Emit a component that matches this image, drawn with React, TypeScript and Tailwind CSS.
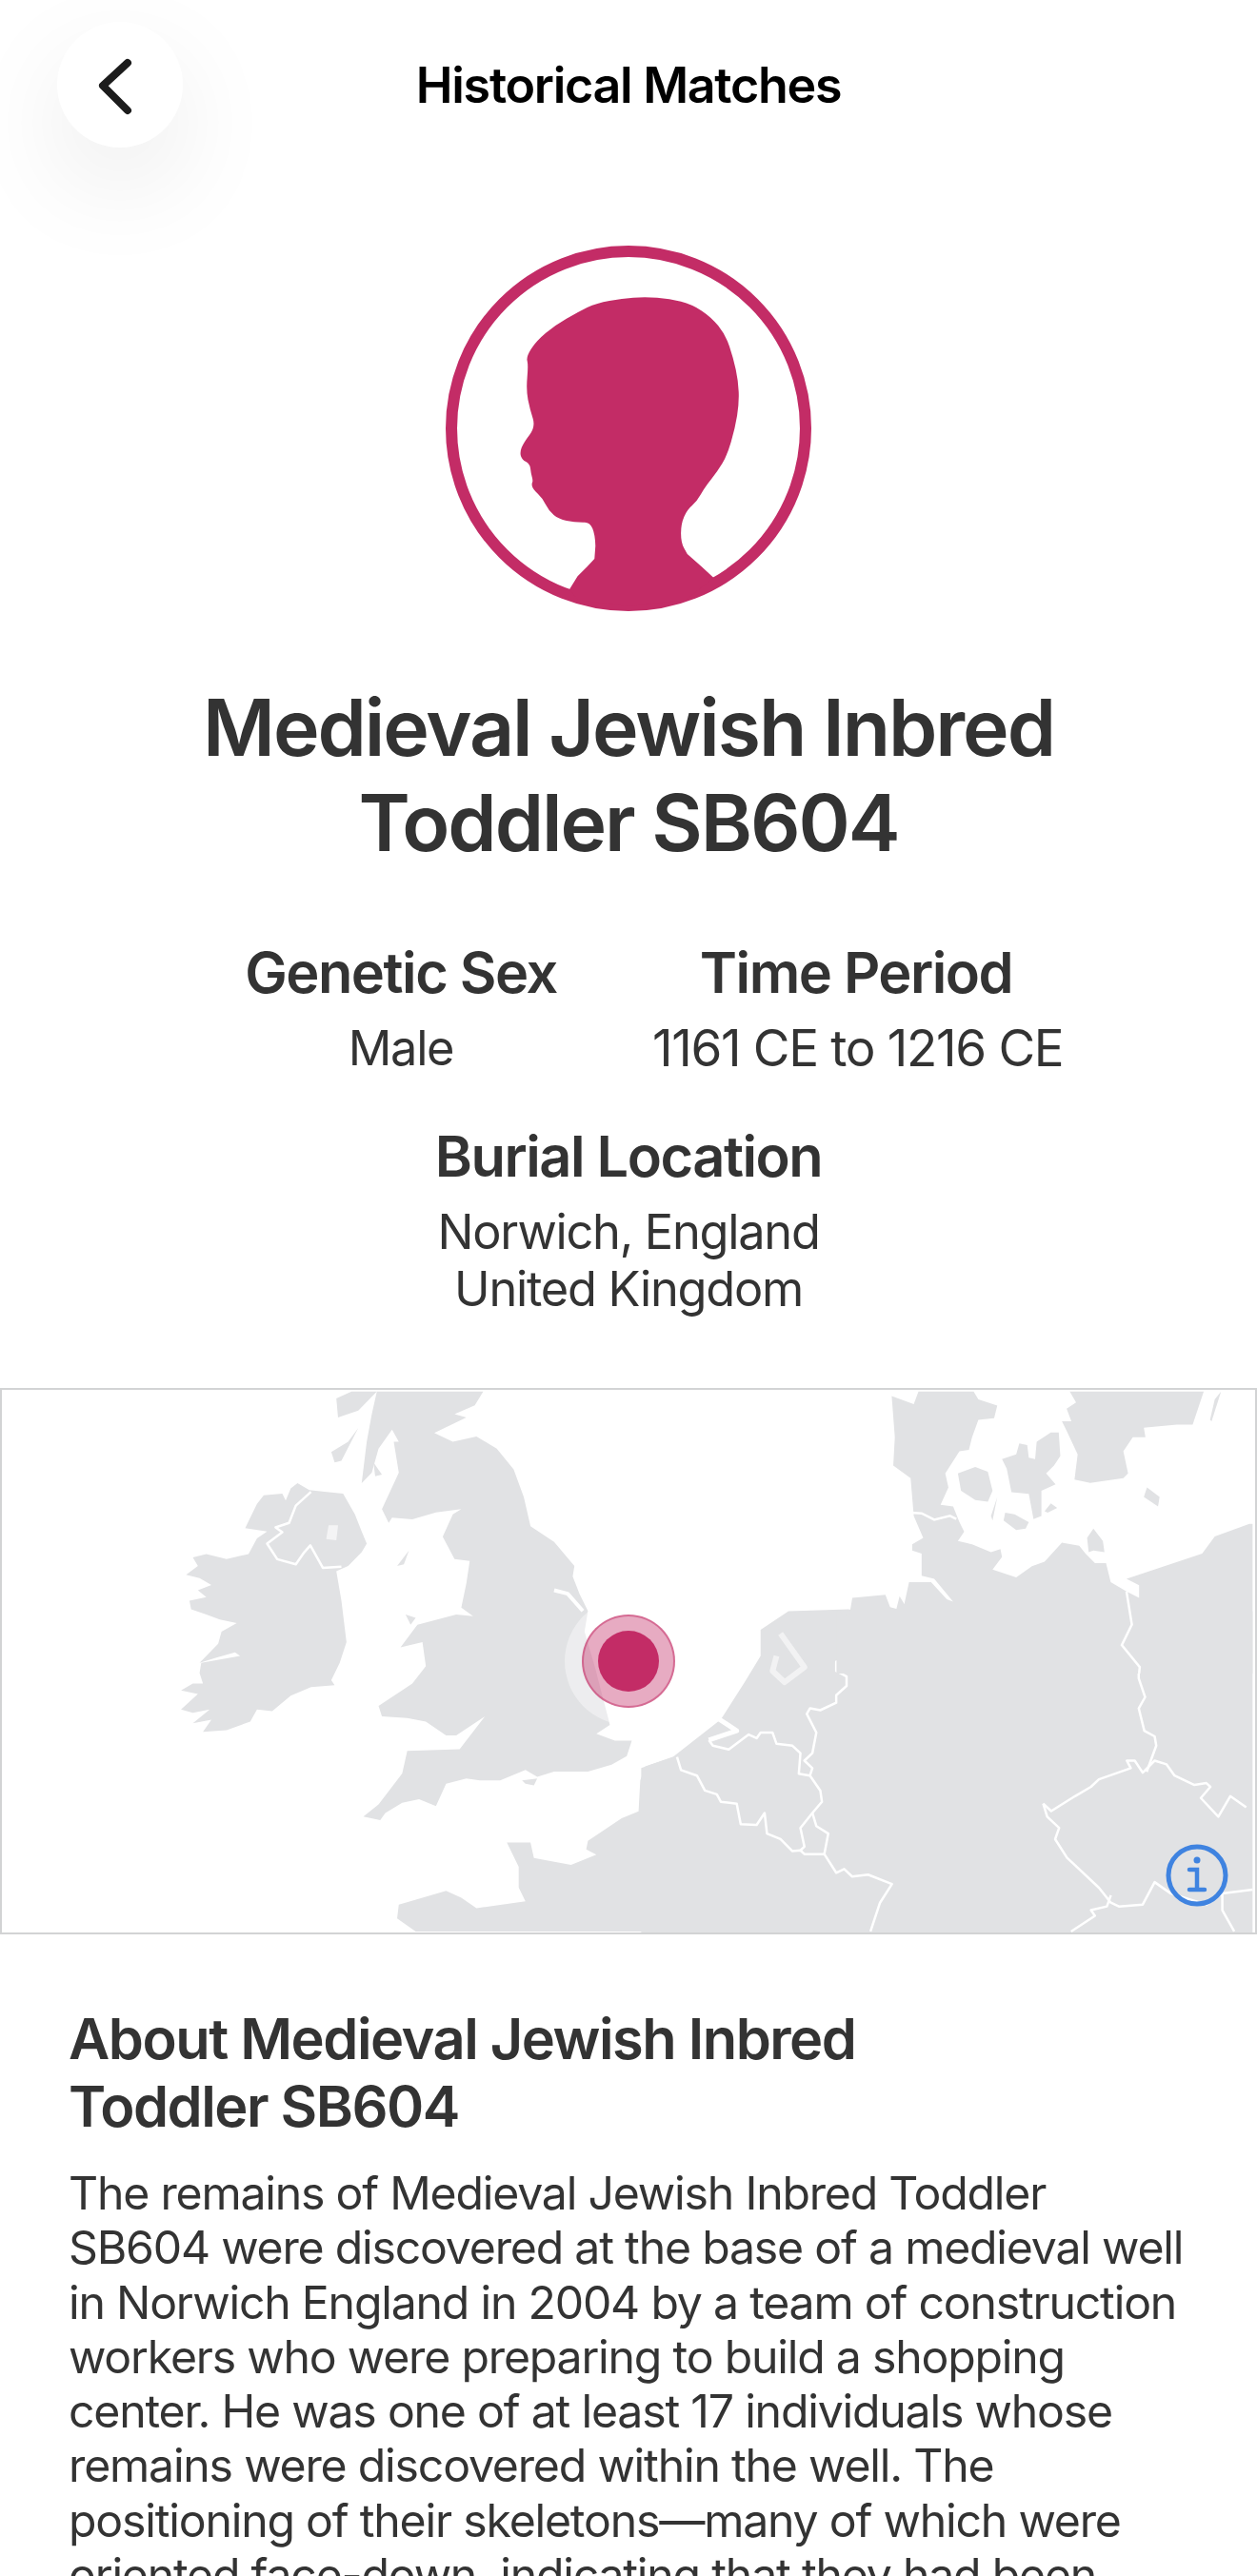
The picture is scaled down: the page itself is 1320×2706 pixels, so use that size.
import * as React from "react";

const LAND = "#e1e2e4";
const PINK = "#c32c66";

// traced at 2.8x from the left part of the map
const ireland = "M110 485 L150 475 L210 490 L275 475 L300 430 L330 410 L265 400 L300 330 L320 305 L375 300 L385 320 L400 285 L420 270 L455 290 L500 295 L555 300 L590 360 L610 410 L625 445 L610 470 L570 510 L535 525 L550 610 L565 730 L545 790 L520 840 L530 855 L460 860 L400 885 L345 930 L300 925 L280 960 L210 985 L140 990 L165 955 L110 965 L160 925 L110 935 L75 925 L125 880 L75 870 L110 850 L140 850 L130 820 L135 790 L250 770 L235 760 L180 775 L130 790 L185 735 L195 700 L240 675 L190 665 L150 650 L105 635 L100 610 L150 600 L125 580 L165 565 L130 545 L90 535 L125 510 Z";
const britain = "M655 5 L970 5 L945 45 L885 70 L920 80 L825 125 L880 150 L950 135 L1010 170 L1060 230 L1090 310 L1110 395 L1180 440 L1240 510 L1235 540 L1255 590 L1280 640 L1270 700 L1300 800 L1340 950 L1345 970 L1305 995 L1360 1015 L1410 1015 L1395 1060 L1350 1085 L1280 1105 L1180 1105 L1130 1120 L1095 1100 L1020 1130 L960 1130 L920 1125 L860 1140 L830 1205 L780 1185 L730 1195 L680 1225 L665 1245 L615 1235 L660 1200 L730 1110 L745 1045 L900 1040 L975 945 L890 1000 L860 1000 L800 960 L745 950 L670 945 L660 915 L760 850 L800 800 L790 730 L725 745 L775 680 L890 650 L940 655 L905 630 L920 560 L930 495 L885 490 L850 425 L880 360 L905 345 L830 355 L760 375 L700 370 L690 385 L670 345 L720 240 L705 150 L720 150 L700 115 L660 170 L640 240 L610 270 L625 150 L640 70 Z";
const france = "M1040 1310 L1110 1310 L1120 1355 L1230 1375 L1305 1345 L1275 1330 L1280 1305 L1380 1240 L1430 1220 L1435 1130 L1450 1090 L1540 1060 L1568 1050 L1568 1568 L770 1568 L715 1530 L720 1490 L860 1450 L905 1470 L950 1500 L1095 1480 L1075 1440 L1075 1380 Z";
const smallIsles = [
  "M580 5 L655 5 L600 60 L540 80 L535 25 Z",
  "M520 180 L570 150 L600 110 L550 205 L530 210 Z",
  "M645 210 L670 245 L650 250 Z",
  "M715 510 L750 465 L735 505 Z",
  "M740 650 L770 660 L755 680 Z",
  "M1085 1130 L1130 1125 L1120 1145 L1095 1140 Z",
];

// traced from the wide, squashed crop of the map
const continent = "M950 690 L985 640 L1060 635 L1075 640 L1568 640 L1568 1500 L800 1500 L800 1060 L840 1030 L900 930 L930 830 L950 760 Z";

const north = "M0 700 L40 720 L50 660 L155 650 L170 690 L190 695 L200 655 L215 680 L230 610 L300 610 L350 665 L370 672 L310 600 L270 590 L270 520 L240 510 L240 490 L275 470 L245 400 L240 340 L235 280 L180 240 L185 150 L175 20 L245 45 L260 5 L435 5 L450 30 L510 50 L500 90 L450 95 L430 150 L420 190 L390 195 L345 265 L355 310 L330 365 L370 370 L390 420 L405 450 L385 480 L430 490 L490 515 L520 505 L525 530 L495 570 L570 595 L620 560 L660 545 L715 485 L770 495 L790 520 L820 550 L855 550 L870 610 L920 640 L960 660 L960 620 L920 600 L1160 520 L1200 465 L1310 425 L1320 425 L1320 900 L0 900 Z";
const islands = [
  "M385 265 L440 245 L480 260 L495 320 L480 355 L440 350 L395 320 Z",
  "M525 220 L570 205 L580 170 L605 175 L610 215 L630 220 L635 165 L680 135 L705 135 L710 210 L690 240 L665 265 L695 300 L650 320 L650 400 L625 410 L610 330 L555 325 L540 250 Z",
  "M535 390 L565 395 L610 420 L600 440 L570 445 L530 415 Z",
  "M660 385 L680 360 L700 375 L670 390 Z",
  "M490 400 L510 340 L495 415 Z",
  "M715 100 L745 100 L730 60 L760 40 L740 5 L1165 5 L1130 110 L1080 110 L975 120 L980 150 L940 150 L910 195 L925 265 L910 280 L805 295 L755 285 L765 205 L730 130 Z",
  "M1185 95 L1200 30 L1220 5 L1190 100 Z",
  "M975 340 L985 310 L1025 340 L1020 370 Z",
  "M795 470 L815 440 L845 480 L850 515 L815 510 L800 515 Z",
];

const bordersA = [
  "M1410 590 L1417 675 L1403 730 L1425 790 L1425 820 L1433 870 L1425 900 L1432 960 L1445 975 L1447 1000 L1435 1070",
  "M1305 1155 L1315 1175 L1345 1135 L1365 1110 L1375 1090 L1415 1060 L1410 1040 L1420 1040 L1430 1072 L1445 1040 L1460 1050 L1470 1080 L1495 1105 L1510 1100 L1515 1110 L1503 1140 L1525 1190 L1540 1135 L1560 1165",
  "M1305 1155 L1310 1190 L1325 1220 L1320 1250 L1335 1300 L1345 1320 L1375 1380 L1390 1420 L1400 1430 L1430 1425 L1445 1365 L1465 1395 L1510 1425 L1530 1395 L1568 1385",
  "M1390 1400 L1385 1430 L1365 1440 L1370 1455 L1340 1497",
  "M1530 1395 L1530 1440 L1545 1497",
  "M845 1030 L850 1065 L870 1080 L880 1120 L895 1130 L900 1150 L920 1155 L925 1210 L945 1212 L955 1180 L958 1235 L975 1250 L990 1282 L1000 1280 L1005 1290 L1030 1290 L1045 1340 L1055 1330 L1065 1350 L1085 1345 L1115 1370 L1100 1420 L1088 1497",
  "M885 985 L890 1000 L910 1010 L935 970 L945 980 L950 965 L965 965 L970 995 L990 1000 L1000 1020 L998 1075 L1012 1080 L1025 1120 L1027 1150 L1015 1180 L1000 1220 L1005 1270 L1000 1280",
  "M1015 1180 L1020 1215 L1035 1235 L1030 1290",
  "M1068 650 L1065 720 L1060 770 L1045 775 L1045 800 L1058 815 L1058 840 L1045 865 L1045 885 L1025 905 L1012 900 L1008 915 L1020 965 L1015 1020 L1005 1040 L1015 1060 L1012 1080",
];

// head outline, rounded off between the traced points
const head: [number, number][] = [
  [616, 1000], [614, 925], [550, 926], [500, 915], [470, 890], [450, 850], [420, 822], [415, 805], [420, 795],
  [413, 770], [410, 742], [385, 728], [378, 705], [390, 675], [428, 625], [410, 570], [398, 510], [405, 430],
  [398, 405], [430, 355], [490, 305], [560, 265], [620, 235], [700, 222], [770, 216], [850, 222], [920, 240],
  [980, 280], [1025, 335], [1050, 410], [1065, 480], [1068, 550], [1055, 630], [1030, 715], [1000, 765],
  [960, 815], [935, 860], [905, 885], [885, 930], [885, 990], [905, 1025],
];

function headPath() {
  let d = "M535 1135 L560 1095 L590 1065 L613 1040 L616 1000";
  for (let i = 1; i < head.length - 1; i++) {
    const [x, y] = head[i];
    const [nx, ny] = head[i + 1];
    d += ` Q${x} ${y} ${(x + nx) / 2} ${(y + ny) / 2}`;
  }
  return d + " L905 1025 L950 1065 L988 1100 L900 1170 L720 1190 L560 1170 Z";
}

function EuropeMap() {
  return (
    <svg viewBox="0 0 1320 574" className="block w-full h-full blur-[0.6px]" fill={LAND}>
      <g transform="translate(160 0) scale(0.3571 0.3655)">
        <path d={ireland} />
        <path d={britain} />
        <path d={france} />
        {smallIsles.map((d) => (
          <path key={d} d={d} />
        ))}
        <path d="M512 392 L540 392 L535 435 L505 432 Z" fill="#f4f4f5" />
        <g fill="none" stroke="#fff" strokeLinejoin="round">
          <path d="M460 295 L415 335 L395 385 L355 398 L375 412 L330 445 L360 490 L415 505 L440 470 L458 450 L495 515 L550 512" strokeWidth={2.5} vectorEffect="non-scaling-stroke" />
          <path d="M1180 580 L1220 590 L1265 640" strokeWidth={4} vectorEffect="non-scaling-stroke" />
        </g>
      </g>
      <g transform="scale(0.8418 0.3954) translate(0 -48)">
        <path d={continent} />
        <g fill="none" stroke="#fff" strokeLinejoin="round">
          {bordersA.map((d) => (
            <path key={d} d={d} strokeWidth={2.5} vectorEffect="non-scaling-stroke" />
          ))}
          <path d="M975 700 L995 760 L1005 790 L980 830 L965 800 L970 760" strokeWidth={6} stroke="#f2f2f3" vectorEffect="non-scaling-stroke" />
          <path d="M885 985 L920 960 L895 925" strokeWidth={5} vectorEffect="non-scaling-stroke" />
        </g>
      </g>
      <g transform="translate(880 0) scale(0.3333)">
        <path d={north} />
        {islands.map((d) => (
          <path key={d} d={d} />
        ))}
        <g fill="none" stroke="#fff" strokeWidth={2.5}>
          <path d="M235 390 L270 392 L310 412 L360 400 L380 410" vectorEffect="non-scaling-stroke" />
          <path d="M920 640 L937 745 L905 810 L962 880 L960 900" vectorEffect="non-scaling-stroke" />
        </g>
      </g>
    </svg>
  );
}

function Silhouette() {
  return (
    <svg viewBox="145 55 1150 1150" className="block w-[384px] h-[384px]">
      <circle cx="720" cy="630" r="557" fill="none" stroke={PINK} strokeWidth="36" />
      <path fill={PINK} d={headPath()} />
    </svg>
  );
}

function InfoIcon() {
  return (
    <svg viewBox="0 0 70 70" className="w-[70px] h-[70px]" fill="none" stroke="#3f83e0" strokeLinecap="round">
      <circle cx="35" cy="35" r="30" strokeWidth="5" />
      <circle cx="35" cy="19" r="3.5" fill="#3f83e0" stroke="none" />
      <path d="M27 29 H35 V50 M27 50 H43" strokeWidth="4.5" />
    </svg>
  );
}

function Fact({ label, children, digits = false }: { label: string; children: React.ReactNode; digits?: boolean }) {
  return (
    <div className="text-center">
      <div className="text-[59.5px] leading-[68px] font-semibold tracking-[-0.025em]">{label}</div>
      <div className={`mt-[16px] leading-[60px] tracking-[-0.025em] whitespace-nowrap ${digits ? "text-[53px]" : "text-[50.5px]"}`}>
        {children}
      </div>
    </div>
  );
}

export default function App() {
  return (
    <div className="h-[2706px] w-[1320px] overflow-hidden bg-white text-[#333333]" style={{ fontFamily: "Inter, sans-serif" }}>
      <header className="relative h-[180px] flex items-center justify-center">
        <button className="absolute left-[60px] top-[23px] w-[132px] h-[132px] rounded-full bg-white shadow-[0_40px_110px_rgba(0,0,0,0.08)] flex items-center justify-center">
          <svg viewBox="0 0 132 132" className="w-[132px] h-[132px]" fill="none" stroke="#1c1c1c" strokeWidth="8" strokeLinecap="round" strokeLinejoin="round">
            <path d="M74 43 L48 67 L74 93" />
          </svg>
        </button>
        <h1 className="text-[52px] font-semibold text-black tracking-[-0.025em]">Historical Matches</h1>
      </header>

      <div className="mt-[78px] flex justify-center">
        <Silhouette />
      </div>

      <h2 className="mt-[72px] text-center text-[82.3px] leading-[100px] font-semibold tracking-[-0.025em]">
        Medieval Jewish Inbred
        <br />
        Toddler SB604
      </h2>

      <div className="mt-[73px] mx-auto w-[906px] grid grid-cols-2 gap-x-[50px]">
        <Fact label="Genetic Sex">Male</Fact>
        <Fact label="Time Period" digits>1161 CE to 1216 CE</Fact>
      </div>
      <div className="mt-[49px]">
        <Fact label="Burial Location">
          Norwich, England
          <br />
          United Kingdom
        </Fact>
      </div>

      <div className="relative mt-[74px] h-[574px] border-2 border-[#d2d3d4] overflow-hidden">
        <EuropeMap />
        <div className="absolute left-[591px] top-[218px] w-[134px] h-[134px] rounded-full bg-white/40 flex items-center justify-center">
          <div className="w-[98px] h-[98px] rounded-full bg-[#c32c66]/40 border-2 border-[#c32c66]/50 flex items-center justify-center">
            <div className="w-[64px] h-[64px] rounded-full bg-[#c32c66]" />
          </div>
        </div>
        <div className="absolute right-[26px] top-[475px]">
          <InfoIcon />
        </div>
      </div>

      <section className="px-[72px] pt-[74px]">
        <h3 className="text-[59.5px] leading-[71px] font-semibold tracking-[-0.025em]">
          About Medieval Jewish Inbred
          <br />
          Toddler SB604
        </h3>
        <p className="mt-[27px] text-[48.2px] leading-[57.3px] tracking-[-0.025em] whitespace-nowrap">
          The remains of Medieval Jewish Inbred Toddler
          <br />
          SB604 were discovered at the base of a medieval well
          <br />
          in Norwich England in 2004 by a team of construction
          <br />
          workers who were preparing to build a shopping
          <br />
          center. He was one of at least 17 individuals whose
          <br />
          remains were discovered within the well. The
          <br />
          positioning of their skeletons—many of which were
          <br />
          oriented face-down, indicating that they had been
        </p>
      </section>
    </div>
  );
}
